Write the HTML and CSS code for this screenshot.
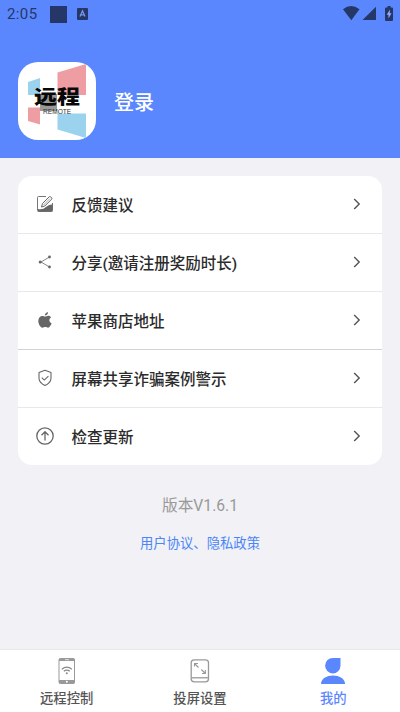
FILE: index.html
```html
<!DOCTYPE html>
<html lang="zh-CN">
<head>
<meta charset="utf-8">
<title>我的</title>
<link rel="stylesheet" href="styles.css">
</head>
<body>
<div class="screen">
  <header class="header">
    <div class="status">
      <span class="time">2:05</span>
      <span class="block"></span>
      <svg class="badge" width="11" height="12" viewBox="0 0 11 12"><rect width="11" height="12" rx="1" fill="#253768"/><path d="M3 8.5 5.500 2.800 8 8.500M3.800 6.800h3.400" fill="none" stroke="#7696ee" stroke-width="1.300"/></svg>
      <svg class="signals" width="51" height="16" viewBox="0 0 51 16" fill="#253768"><path d="M0 3.200Q8-3 16.500 3.200L8.300 14.200Z"/><path d="M33 .8V14H19.500Z"/><path d="M43 1.500h1.500V0h3v1.500H49q1 0 1 1V14q0 1-1 1h-6q-1 0-1-1V2.500q0-1 1-1Z"/><path d="M47 3.500 43.700 8.700H45.500V12.500L48.500 7.200H46.700Z" fill="#91acfa"/></svg>
    </div>
    <div class="profile">
      <div class="avatar">
        <svg class="avatar-art" width="78" height="78" viewBox="0 0 78 78"><path d="M39.500 10.500 68 2v31H39.500Z" fill="#ee9da3"/><path d="M10 20 22 16v17H10Z" fill="#9bd3ee"/><path d="M10 45.500h12v17L10 59Z" fill="#ee9da3"/><path d="M39.500 51.500H68V76L39.500 67.500Z" fill="#9bd3ee"/><path d="M22 32h17v17H22Z" fill="#999"/></svg>
        <div class="logo">
          <div class="logo-name">远程</div>
          <div class="logo-sub">REMOTE</div>
        </div>
      </div>
      <div class="login">登录</div>
    </div>
  </header>
  <main class="main">
    <div class="card">
      <div class="row"><svg class="icon" width="18" height="18" viewBox="0 0 18 18"><path d="M10 1.500H2.500q-1 0-1 1V15.500q0 1 1 1h13q1 0 1-1V8" fill="none" stroke="#777" stroke-width="1"/><path d="M2 16.500v-2.500Q7 15 10 12t6.500-2.500V16.500Z" fill="#666"/><path d="m5.500 12 1-3.500L13.300 1.700q.7-.5 1.400.2l.9.900q.6.700 0 1.400L8.800 11Z" fill="#fff" stroke="#666" stroke-width="1"/><path d="m7.500 10 6.500-6.500" stroke="#888" stroke-width=".7"/></svg><span class="label">反馈建议</span><svg class="arrow" width="8" height="12" viewBox="0 0 8 12"><path d="m1.200 1 5 5-5 5"/></svg></div>
      <div class="row"><svg class="icon" width="18" height="18" viewBox="0 0 18 18"><path d="M13.500 4 5 9l8.500 5" fill="none" stroke="#777" stroke-width=".9"/><g fill="#666"><circle cx="13.500" cy="4" r="1.400"/><circle cx="4.200" cy="9" r="1.500"/><circle cx="13.500" cy="14" r="1.400"/></g></svg><span class="label">分享(邀请注册奖励时长)</span><svg class="arrow" width="8" height="12" viewBox="0 0 8 12"><path d="m1.200 1 5 5-5 5"/></svg></div>
      <div class="row"><svg class="icon" width="18" height="18" viewBox="0 0 18 18" fill="#666"><path d="M9 5.600C10 5.600 11 4.800 12.200 4.800c1.400 0 2.400.7 2.900 1.500-2.500 1.600-2.200 4.800.5 6-.6 1.700-2 4.400-3.500 4.400-1.100 0-1.500-.6-2.800-.6s-1.800.6-2.800.6C4.400 16.700 2.300 13 2.300 10c0-3.200 2-5.100 4.100-5.100 1.200 0 1.900.7 2.600.7Z"/><path d="M8.900 4.600C8.800 2.800 10.300 1.300 12 1.100c.2 1.900-1.300 3.500-3.100 3.500Z"/></svg><span class="label">苹果商店地址</span><svg class="arrow" width="8" height="12" viewBox="0 0 8 12"><path d="m1.200 1 5 5-5 5"/></svg></div>
      <div class="row strong"><svg class="icon" width="18" height="18" viewBox="0 0 18 18" fill="none" stroke="#666" stroke-width="1.100"><path d="M9 1.300 15 3.500V9.500Q14.700 13.800 9 16.500 3.300 13.800 3 9.500V3.500Z" stroke-linejoin="round"/><path d="m5.800 8.700 2.500 2.400 4.100-4"/></svg><span class="label">屏幕共享诈骗案例警示</span><svg class="arrow" width="8" height="12" viewBox="0 0 8 12"><path d="m1.200 1 5 5-5 5"/></svg></div>
      <div class="row"><svg class="icon" width="18" height="18" viewBox="0 0 18 18" fill="none" stroke="#666" stroke-width="1.300"><circle cx="9" cy="9" r="8.200"/><path d="M9 13.500V5M5.500 8.200 9 4.700l3.500 3.500"/></svg><span class="label">检查更新</span><svg class="arrow" width="8" height="12" viewBox="0 0 8 12"><path d="m1.200 1 5 5-5 5"/></svg></div>
    </div>
    <div class="version">版本V1.6.1</div>
    <div class="links">用户协议、隐私政策</div>
  </main>
  <nav class="tabs">
    <div class="tab"><svg width="28" height="28" viewBox="0 0 28 28"><rect x="6" y="1.500" width="15.500" height="25" rx="1.500" fill="#fff" stroke="#999"/><path d="M6 1.500h15.500V4H6ZM6 23h15.500v3.500H6Z" fill="#999"/><path d="M12 2.700h4" stroke="#fff" stroke-width=".7"/><circle cx="13.800" cy="24.800" r="1" fill="#fff"/><path d="M8.800 12.200q5-4 10 0M10.800 14.300q3-2.300 6 0" fill="none" stroke="#888" stroke-width="1.200"/><circle cx="13.800" cy="16.300" r="1" fill="#888"/></svg><span>远程控制</span></div>
    <div class="tab"><svg width="28" height="28" viewBox="0 0 28 28" fill="none" stroke="#999" stroke-width="1.300"><rect x="5.200" y="2.800" width="17.300" height="22" rx="3"/><path d="M5.500 20.800h17"/><path d="M8.500 9.500V6.500h3.500M8.500 6.500l4 4M19.300 13v3.500H16M19.300 16.500l-4-4" stroke-width="1.100"/></svg><span>投屏设置</span></div>
    <div class="tab active"><svg width="28" height="28" viewBox="0 0 28 28" fill="#5b87fe"><path d="M14 1h7.500v7.800A7.700 7.700 0 1 1 14 1Z"/><path d="M2 27q0-4 4-6.500 3-2 8-2t8 2q4 2.500 4 6.500Z"/></svg><span>我的</span></div>
  </nav>
</div>
</body>
</html>
```
FILE: styles.css
```css
* { box-sizing: border-box; }
body { margin: 0; font-family: Roboto, "Noto Sans CJK SC", sans-serif; background: #f1f1f6; }
svg { display: block; flex: none; }
.screen { width: 400px; height: 712px; display: flex; flex-direction: column; overflow: hidden; }
.header { height: 158px; background: #5b87fe; }
.status { height: 28px; display: flex; align-items: center; padding: 0 6px 0 7px; color: #253768; }
.time { width: 43px; font-size: 15px; line-height: 20px; letter-spacing: .4px; }
.block { width: 17px; height: 17px; background: #253768; }
.badge { margin-left: 10px; }
.signals { margin-left: auto; margin-top: -1px; }
.profile { display: flex; align-items: center; padding: 34px 18px 0; }
.avatar { position: relative; width: 78px; height: 78px; border-radius: 20px; background: #fff; overflow: hidden; }
.logo { position: absolute; left: 16px; top: 26px; display: flex; flex-direction: column; }
.logo-name { height: 20px; font-size: 23px; line-height: 20px; font-weight: 900; color: #080808; white-space: nowrap; transform: scaleY(.86); }
.logo-sub { margin-left: 9px; font: 6.600px/8px "Liberation Sans", sans-serif; color: #333; }
.login { margin: 3px 0 0 18px; font-size: 20px; line-height: 28px; font-weight: 500; color: #fff; }
.main { flex: 1; padding: 18px 18px 0; }
.card { height: 289px; border-radius: 14px; background: #fff; overflow: hidden; display: grid; grid-template-rows: 57px 58px 58px 58px 58px; }
.row { display: flex; align-items: center; padding: 0 21px 0 18px; color: #2b2b2b; }
.row + .row { border-top: 1px solid #e8e8e9; }
.row.strong { border-top-color: #d3d3d4; }
.icon { margin-bottom: 1px; }
.label { margin: 2px 0 0 17.500px; flex: 1; font-size: 15.500px; line-height: 24px; font-weight: 500; }
.arrow { margin-bottom: 2px; fill: none; stroke: #555; stroke-width: 1.400; }
.version { margin-top: 29px; text-align: center; font-size: 15.700px; line-height: 24px; color: #999; }
.links { margin-top: 16px; text-align: center; font-size: 13.330px; line-height: 20px; color: #4a86f7; }
.tabs { height: 63px; background: #fff; border-top: 1px solid #e9e9ec; display: grid; grid-template-columns: repeat(3, 1fr); }
.tab { display: flex; flex-direction: column; align-items: center; padding-top: 7px; font-size: 13.330px; line-height: 20px; font-weight: 500; color: #555; }
.tab span { margin-top: 4px; }
.tab.active { color: #5b87fe; }
```
